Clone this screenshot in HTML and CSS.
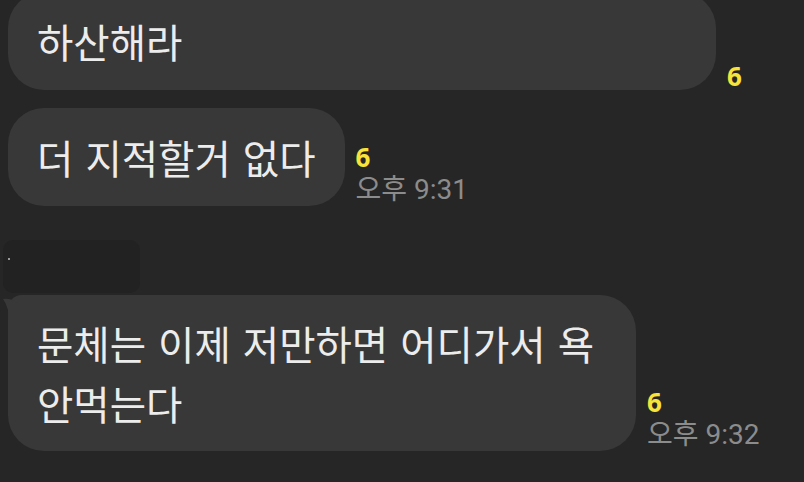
FILE: index.html
```html
<!DOCTYPE html>
<html lang="ko">
<head>
    <meta charset="UTF-8">
    <meta name="viewport" content="width=device-width, initial-scale=1.0">
    <title>채팅</title>
    <link rel="stylesheet" href="styles.css">
</head>
<body>

    <!-- 대화 목록 -->
    <div class="chat">
        <div class="row first">
            <div class="bubble wide">하산해라</div>
            <div class="meta">
                <span class="unread">6</span>
            </div>
        </div>

        <div class="row">
            <div class="bubble">더 지적할거 없다</div>
            <div class="meta">
                <span class="unread">6</span>
                <span class="time">오후 9:31</span>
            </div>
        </div>

        <!-- 가려진 프로필 영역 -->
        <div class="profile">
            <span class="dot"></span>
        </div>

        <div class="row">
            <div class="bubble tail">
                <svg class="tail-icon" width="20" height="24" viewBox="0 0 20 24">
                    <path d="M0 2 Q8 1 14 6 L20 6 L20 24 L6 24 Q6 10 0 2 Z" fill="#383838"/>
                </svg>
                문체는 이제 저만하면 어디가서 욕<br>안먹는다
            </div>
            <div class="meta">
                <span class="unread">6</span>
                <span class="time">오후 9:32</span>
            </div>
        </div>
    </div>

</body>
</html>
```

FILE: styles.css
```css
* {
    margin: 0;
    padding: 0;
    box-sizing: border-box;
}

body {
    font-family: "Noto Sans CJK KR", "Noto Sans", sans-serif;
    background-color: #262626;
    color: #ececec;
    overflow: hidden;
}

.chat {
    display: flex;
    flex-direction: column;
    padding-left: 8px;
}

.row {
    display: flex;
    align-items: flex-end;
    gap: 11px;
    margin-top: 18px;
}

.row.first {
    margin-top: -8px;
}

.bubble {
    position: relative;
    background-color: #383838;
    border-radius: 36px;
    padding: 19px 29px;
    font-size: 39.5px;
    line-height: 60px;
    word-spacing: 1px;
    white-space: nowrap;
}

.bubble.wide {
    width: 708px;
}

.bubble.tail {
    border-top-left-radius: 14px;
    padding: 18px 42px 18px 29px;
}

.tail-icon {
    position: absolute;
    left: -5px;
    top: 2px;
}

.meta {
    display: flex;
    flex-direction: column;
    padding-bottom: 2px;
}

.unread {
    font-family: "Noto Sans", Roboto, sans-serif;
    font-weight: bold;
    font-size: 26px;
    line-height: 24px;
    color: #f7e33a;
}

.time {
    margin-top: 7px;
    font-family: Roboto, "Noto Sans CJK KR", sans-serif;
    font-size: 28px;
    line-height: 28px;
    color: #8c8c8c;
}

.profile {
    width: 137px;
    height: 53px;
    margin: 34px 0 0 -5px;
    padding: 18px 0 0 5px;
    background-color: #222222;
    border-radius: 10px;
}

.dot {
    display: block;
    width: 2px;
    height: 2px;
    background-color: #9a9a9a;
}

.profile + .row {
    margin-top: 2px;
}
```
